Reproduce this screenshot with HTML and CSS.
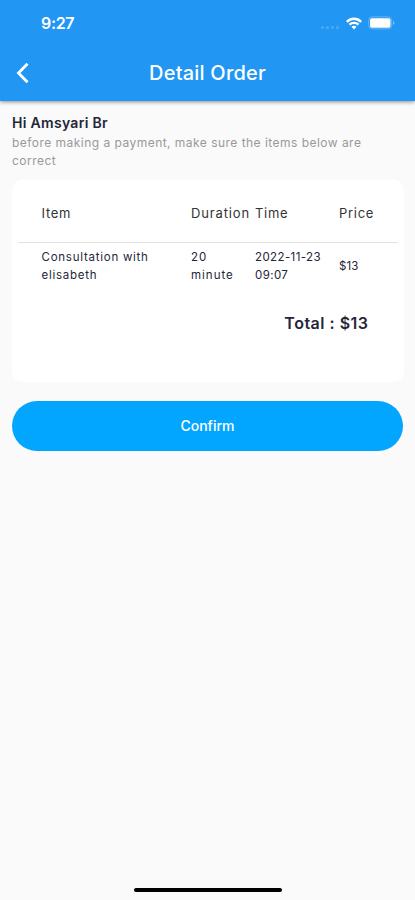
FILE: index.html
```html
<!DOCTYPE html>
<html lang="en">
<head>
<meta charset="utf-8">
<title>Detail Order</title>
<link rel="stylesheet" href="styles.css">
</head>
<body>
<div class="screen">
  <header class="header">
    <div class="status">
      <span class="clock">9:27</span>
      <span class="indicators">
        <span class="signal"><i></i><i></i><i></i><i></i></span>
        <svg class="wifi" width="16" height="13" viewBox="0 0 16 13" fill="none" stroke="#fff" stroke-width="2.4">
          <path d="M.8 4.8C4.8.7 11.2.7 15.2 4.8"/>
          <path d="M3.5 7.7C6 5.3 10 5.3 12.5 7.7"/>
          <path d="M5.5 9.8C6.9 8.4 9.1 8.4 10.5 9.8L8 12.5Z" fill="#fff" stroke="none"/>
        </svg>
        <svg class="battery" width="27" height="14" viewBox="0 0 27 14">
          <rect x=".7" y=".9" width="23" height="12" rx="3.5" fill="none" stroke="#fff" stroke-opacity=".3"/>
          <rect x="2" y="2.3" width="20.5" height="9.4" rx="2" fill="#fff"/>
          <path d="M25 5v4c2-.8 2-3.2 0-4Z" fill="#fff" fill-opacity=".4"/>
        </svg>
      </span>
    </div>
    <div class="navbar">
      <svg class="back" width="14" height="22" viewBox="0 0 14 22" fill="none" stroke="#fff" stroke-width="2.8"><path d="M12.5 1.8 3.5 11l9 9.2"/></svg>
      <h1 class="title">Detail Order</h1>
    </div>
  </header>
  <main class="content">
    <h2 class="greeting">Hi Amsyari Br</h2>
    <p class="note">before making a payment, make sure the items below are<br>correct</p>
    <section class="card">
      <div class="row row-head">
        <span>Item</span><span class="h-duration">Duration</span><span>Time</span><span>Price</span>
      </div>
      <div class="row row-body">
        <span>Consultation with<br>elisabeth</span><span class="c-duration">20<br>minute</span><span class="c-time">2022-11-23<br>09:07</span><span class="c-price">$13</span>
      </div>
      <p class="total">Total : $13</p>
    </section>
    <button class="confirm">Confirm</button>
  </main>
  <div class="home-bar"></div>
</div>
</body>
</html>
```
FILE: styles.css
```css
* { box-sizing: border-box; }
body { margin: 0; background: #fafafa; font-family: Inter, sans-serif; color: #242638; }
h1, h2, p { margin: 0; }
.screen { width: 415px; height: 900px; display: flex; flex-direction: column; overflow: hidden; }
.header { height: 101px; flex: none; background: #2196f3; color: #fff; box-shadow: 0 1px 4px rgba(0, 0, 0, .45); }
.status { height: 45px; padding: 1px 20.5px 0 41px; display: flex; justify-content: space-between; align-items: center; }
.clock { font-size: 16px; font-weight: 600; letter-spacing: -.35px; }
.indicators { display: flex; align-items: center; }
.signal { display: flex; gap: 2px; margin: 9px 7px 0 0; }
.signal i { width: 3px; height: 3px; border-radius: 50%; background: rgba(255, 255, 255, .2); }
.wifi { margin-right: 6px; }
.navbar { height: 56px; display: grid; grid-template-columns: 48px 1fr 48px; align-items: center; }
.back { margin-left: 14.5px; }
.title { font-size: 20px; line-height: 24px; font-weight: 500; letter-spacing: .2px; text-align: center; white-space: nowrap; }
.content { flex: 1; padding: 11px 12px 0; }
.greeting { font-size: 14px; line-height: 21px; font-weight: 600; letter-spacing: .3px; }
.note { margin-top: 1px; font-size: 12px; line-height: 18px; letter-spacing: .47px; color: #999; white-space: nowrap; }
.card { height: 202px; width: 392px; margin-top: 10px; padding: 0 6px; background: #fff; border-radius: 10px; }
.row { display: grid; grid-template-columns: 149.5px 64px 84px 1fr; padding-left: 23.5px; align-items: center; white-space: nowrap; }
.row-head { height: 63px; padding-top: 4px; border-bottom: 1px solid #e2e2e2; font-size: 13px; letter-spacing: .7px; color: #333; }
.h-duration { letter-spacing: .85px; }
.row-body { height: 46px; font-size: 11.5px; line-height: 18px; letter-spacing: .75px; }
.c-duration { letter-spacing: 1px; }
.c-time { letter-spacing: .4px; }
.c-price { letter-spacing: .1px; }
.total { margin: 21px 29.5px 0 0; text-align: right; font-size: 16px; line-height: 26px; font-weight: 600; letter-spacing: .5px; }
.confirm { display: block; width: 391px; height: 50px; margin: 19px 0 0; padding: 0; border: 0; border-radius: 25px; background: #03a6ff; color: #fff; font: 500 14px/20px Inter, sans-serif; }
.home-bar { width: 148px; height: 4px; margin: 0 auto 8px; border-radius: 2px; background: #000; }
```
